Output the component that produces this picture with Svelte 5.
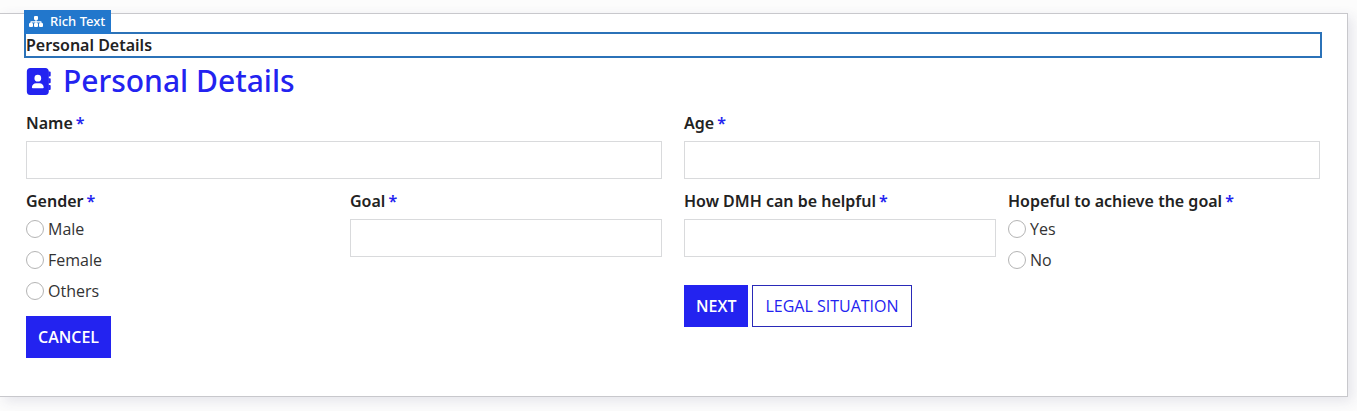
<script>
    let name = $state('');
    let age = $state('');
    let goal = $state('');
    let help = $state('');
    let gender = $state('');
    let hopeful = $state('');

    const genders = ['Male', 'Female', 'Others'];
    const answers = ['Yes', 'No'];
</script>

{#snippet textField(id, label, value, update)}
    <div class="field">
        <label class="label" for={id}>{label}<span class="required">*</span></label>
        <input
            class="input"
            {id}
            type="text"
            required
            {value}
            oninput={(e) => update(e.currentTarget.value)}
        />
    </div>
{/snippet}

{#snippet radioField(id, label, options, value, update)}
    <fieldset class="radio-field">
        <legend class="label">{label}<span class="required">*</span></legend>
        <div class="options">
            {#each options as option}
                <label class="option">
                    <input
                        type="radio"
                        name={id}
                        value={option}
                        checked={value === option}
                        onchange={() => update(option)}
                    />
                    {option}
                </label>
            {/each}
        </div>
    </fieldset>
{/snippet}

<main class="card">
    <div class="rich-text">
        <div class="tag">
            <svg viewBox="0 0 14 11" aria-hidden="true">
                <rect x="5" y="0" width="4" height="4" rx="1" />
                <path d="M6.400 3.500h1.200v1.700h4c.6 0 1 .4 1 1V8h-1.300V6.500H7.600V8H6.400V6.500H2.700V8H1.400V6.200c0-.6.4-1 1-1h4z" />
                <rect x="0" y="7" width="4" height="4" rx="1" />
                <rect x="5" y="7" width="4" height="4" rx="1" />
                <rect x="10" y="7" width="4" height="4" rx="1" />
            </svg>
            Rich Text
        </div>
        Personal Details
    </div>

    <h1 class="title">
        <svg viewBox="16 0 474 512" aria-hidden="true">
            <path
                d="M96 0C60.700 0 32 28.700 32 64v384c0 35.300 28.700 64 64 64h288c35.300 0 64-28.700 64-64V64c0-35.300-28.700-64-64-64H96zm112 288h64c44.200 0 80 35.800 80 80 0 8.800-7.200 16-16 16H144c-8.800 0-16-7.200-16-16 0-44.200 35.800-80 80-80zm-32-96a64 64 0 1 1 128 0 64 64 0 1 1-128 0z"
                fill-rule="evenodd"
            />
            <path
                d="M440 64h28q16 0 16 16v64q0 16-16 16h-28zM440 192h28q16 0 16 16v64q0 16-16 16h-28zM440 320h28q16 0 16 16v64q0 16-16 16h-28z"
            />
        </svg>
        Personal Details
    </h1>

    <form class="columns" onsubmit={(e) => e.preventDefault()}>
        <div class="column">
            {@render textField('name', 'Name', name, (v) => (name = v))}
            <div class="pair">
                {@render radioField('gender', 'Gender', genders, gender, (v) => (gender = v))}
                {@render textField('goal', 'Goal', goal, (v) => (goal = v))}
            </div>
            <div class="buttons">
                <button class="primary" type="button">CANCEL</button>
            </div>
        </div>

        <div class="column">
            {@render textField('age', 'Age', age, (v) => (age = v))}
            <div class="pair">
                {@render textField('help', 'How DMH can be helpful', help, (v) => (help = v))}
                {@render radioField('hopeful', 'Hopeful to achieve the goal', answers, hopeful, (v) => (hopeful = v))}
            </div>
            <div class="buttons">
                <button class="primary" type="submit">NEXT</button>
                <button class="secondary" type="button">LEGAL SITUATION</button>
            </div>
        </div>
    </form>
</main>

<style>
    :global(body) {
        background: #fcfcfc;
    }

    .card {
        background: white;
        border: 1px solid #c8c8cc;
        border-left: 0;
        box-shadow: 4px 4px 12px rgba(60, 60, 110, 0.12);
        color: #222;
        font-family: 'Open Sans', sans-serif;
        font-size: 16px;
        line-height: 24px;
        margin: 13px 9px 14px 0;
        padding: 20px 27px 38px 26px;
    }

    .rich-text {
        font-family: 'Noto Sans', 'Open Sans', sans-serif;
        font-weight: 600;
        line-height: 22px;
        outline: 2px solid #2b72b8;
        position: relative;
    }

    .tag {
        align-items: center;
        background: #2277cc;
        bottom: 100%;
        color: white;
        display: flex;
        font-size: 13px;
        font-weight: 500;
        gap: 7px;
        left: -2px;
        padding: 0 6px 2px 5px;
        position: absolute;
    }

    .tag svg {
        fill: currentColor;
        height: 11px;
        width: 14px;
    }

    .title {
        align-items: center;
        color: #2323f0;
        display: flex;
        font-family: 'Noto Sans', 'Open Sans', sans-serif;
        font-size: 30px;
        font-weight: 500;
        gap: 12px;
        line-height: 40px;
        margin: 5px 0 10px;
    }

    .title svg {
        fill: currentColor;
        height: 27px;
        width: 25px;
    }

    .columns {
        display: flex;
        gap: 22px;
    }

    .column {
        flex: 1;
        min-width: 0;
    }

    .pair {
        display: flex;
        gap: 12px;
        margin-top: 10px;
    }

    .pair > * {
        flex: 1;
        min-width: 0;
    }

    .label {
        display: block;
        font-family: 'Noto Sans', 'Open Sans', sans-serif;
        font-weight: 600;
        padding: 0;
        white-space: nowrap;
    }

    .required {
        color: #2323f0;
        margin-left: 3px;
    }

    .input {
        border: 1px solid #d9dadc;
        box-sizing: border-box;
        display: block;
        font: inherit;
        height: 38px;
        margin-top: 6px;
        padding: 6px 12px;
        width: 100%;
    }

    .radio-field {
        border: 0;
        margin: 0;
        padding: 0;
    }

    .options {
        color: #333;
        display: flex;
        flex-direction: column;
        gap: 7px;
        padding-top: 4px;
    }

    .option {
        align-items: center;
        display: flex;
        gap: 4px;
    }

    .option input {
        appearance: none;
        border: 1px solid #b4b4b4;
        border-radius: 50%;
        height: 18px;
        margin: 0;
        width: 18px;
    }

    .option input:checked {
        background: #2323f0;
        box-shadow: inset 0 0 0 4px white;
    }

    .buttons {
        display: flex;
        gap: 4px;
        margin-top: 13px;
    }

    button {
        border: 1px solid #2323f0;
        cursor: pointer;
        font: inherit;
        padding: 8px 11px;
    }

    .primary {
        background: #2323f0;
        color: white;
        font-weight: 600;
    }

    .secondary {
        background: white;
        border-color: #2a2ab8;
        color: #2323f0;
        padding: 8px 12px;
    }
</style>
